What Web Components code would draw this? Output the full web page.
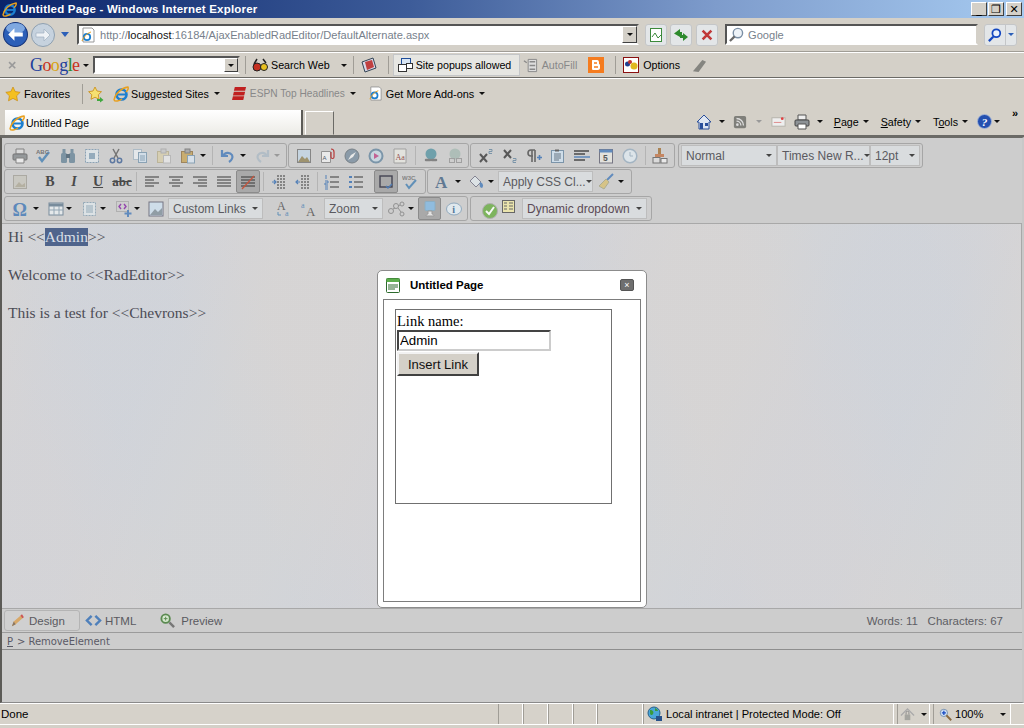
<!DOCTYPE html>
<html>
<head>
<meta charset="utf-8">
<title>Untitled Page</title>
<style>
  html, body { margin: 0; height: 100%; overflow: hidden; background: #d4d0c8; }
  body { font: 11px "Liberation Sans", sans-serif; color: #000; }
</style>
</head>
<body>
<ie-window>
  <ie-titlebar slot="title">Untitled Page - Windows Internet Explorer</ie-titlebar>
  <ie-addressbar slot="address"></ie-addressbar>
  <ie-googlebar slot="google"></ie-googlebar>
  <ie-favbar slot="fav"></ie-favbar>
  <ie-tabbar slot="tabs"></ie-tabbar>
  <rad-editor slot="page"></rad-editor>
  <ie-statusbar slot="status"></ie-statusbar>
</ie-window>

<script>
// every icon used on the page, 16x16 viewBox unless the tag says otherwise
const ICONS = {
  ie: '<circle cx="8.5" cy="8.5" r="5" fill="none" stroke="#1c7fd0" stroke-width="2.6"/><path d="M4 8.5h9" stroke="#1c7fd0" stroke-width="2"/><path d="M1 14C2 8 8 2 15 1c1 2-1 4-2 5M1 14c1 2 5 1 8-1" fill="none" stroke="#e8a020" stroke-width="1.5"/>',
  printer: '<path d="M4 1h8v5H4z" fill="#ddd" stroke="#777"/><rect x="1" y="6" width="14" height="6" rx="1" fill="#8b8f92" stroke="#666"/><path d="M4 10h8v5H4z" fill="#eee" stroke="#777"/>',
  spell: '<path d="M3 9l3 4 7-9" fill="none" stroke="#4f86b5" stroke-width="2.4"/><text x="0" y="6" font-family="Liberation Sans" font-weight="700" font-size="6" fill="#666">ABC</text>',
  binoc: '<rect x="1" y="5" width="6" height="10" rx="1.5" fill="#6f8a9c"/><rect x="9" y="5" width="6" height="10" rx="1.5" fill="#6f8a9c"/><rect x="2.500" y="1" width="3" height="4" fill="#6f8a9c"/><rect x="10.500" y="1" width="3" height="4" fill="#6f8a9c"/><rect x="6" y="6" width="4" height="4" fill="#4f6575"/>',
  selall: '<rect x="1.500" y="1.500" width="13" height="13" fill="#dfe6ea" stroke="#7f9bb0" stroke-dasharray="2 1"/><rect x="5" y="5" width="6" height="6" fill="#8aa6ba"/>',
  cut: '<path d="M5 1l5 9M11 1L6 10" stroke="#666" stroke-width="1.5"/><circle cx="4.500" cy="12.500" r="2.200" fill="none" stroke="#4a6a9a" stroke-width="1.500"/><circle cx="11.500" cy="12.500" r="2.200" fill="none" stroke="#4a6a9a" stroke-width="1.500"/>',
  copy: '<rect x="1.500" y="1.500" width="8" height="10" fill="#e8ecef" stroke="#a8b8c5"/><rect x="6.500" y="4.500" width="8" height="10" fill="#d3e0ec" stroke="#7f9bb0"/><path d="M8 8h5M8 10h5M8 12h5" stroke="#7f9bb0"/>',
  paste: '<rect x="1.500" y="3.500" width="11" height="11" fill="#d8cfae" stroke="#b8b090"/><rect x="5" y="1" width="5" height="4" fill="#c8c8c8" stroke="#aaa"/><rect x="7.500" y="7.500" width="7" height="7.500" fill="#e6e6e6" stroke="#b5b5b5"/>',
  paste2: '<rect x="1.500" y="3.500" width="11" height="11" fill="#c9a860" stroke="#96794a"/><rect x="5" y="1" width="5" height="4" fill="#a5a5a5" stroke="#777"/><rect x="7.500" y="7.500" width="7" height="7.500" fill="#d9e4ee" stroke="#7f9bb0"/>',
  undo: '<path d="M2 2v6h6M3 8c2-4 7-4 9-1 1 2 0 5-3 7" fill="none" stroke="#4f80bb" stroke-width="2.200"/>',
  redo: '<path d="M14 2v6H8M13 8C11 4 6 4 4 7c-1 2 0 5 3 7" fill="none" stroke="#aebbc5" stroke-width="2.200"/>',
  image: '<rect x="1.500" y="1.500" width="13" height="13" fill="#c4d6e4" stroke="#7a7a7a"/><path d="M2 14l4-6 3 3 2-2 3 5z" fill="#96895f"/>',
  docclip: '<path d="M1.500 3.500h9v11h-9z" fill="#eee" stroke="#888"/><path d="M11 1c2 0 3 1 3 3v5c0 2-3 2-3 0V4" fill="none" stroke="#b32020" stroke-width="1.200"/><text x="2.500" y="12" font-family="Liberation Sans" font-size="6" fill="#345">A</text>',
  compass: '<circle cx="8" cy="8" r="7" fill="#7f92a2" stroke="#6a747c"/><path d="M4 12l3-5 5-3-3 5z" fill="#eee"/>',
  media: '<circle cx="8" cy="8" r="6.500" fill="#c8d8e2" stroke="#6d8ca3" stroke-width="2"/><path d="M6 5l5 3-5 3z" fill="#c0508a"/>',
  aa: '<path d="M2 1h12v14H2z" fill="#e6e6e0" stroke="#999"/><text x="3.500" y="12" font-family="Liberation Serif" font-size="8" fill="#8a3a3a">Aa</text>',
  link: '<circle cx="8" cy="6" r="5.500" fill="#5f98a6"/><path d="M3 12h4M9 12h4" stroke="#777" stroke-width="2.500" stroke-linecap="round"/>',
  unlink: '<circle cx="8" cy="6" r="5.500" fill="#a9bcb5"/><rect x="2.500" y="10.500" width="5" height="4" fill="none" stroke="#999"/><rect x="9.500" y="10.500" width="5" height="4" fill="none" stroke="#999"/>',
  sup: '<path d="M2 6l7 8M9 6l-7 8" stroke="#444" stroke-width="2"/><path d="M11 1.500h3v2h-3v2h3" fill="none" stroke="#6d8ca3"/>',
  sub: '<path d="M2 2l7 8M9 2l-7 8" stroke="#444" stroke-width="2"/><path d="M11 10.500h3v2h-3v2h3" fill="none" stroke="#6d8ca3"/>',
  para: '<path d="M9 2v12M6 2v12M9 2H5a3 3 0 000 6h2" fill="none" stroke="#555" stroke-width="1.600"/><path d="M11 9.500h5M13.500 7v5" stroke="#3f74b5" stroke-width="1.600"/>',
  note: '<rect x="1.500" y="2.500" width="12" height="12" fill="#cfe0ee" stroke="#6d8ba3"/><path d="M4 6h7M4 8h7M4 10h7M4 12h5" stroke="#567"/><path d="M5 2.500h4" stroke="#555" stroke-width="2"/>',
  lines: '<path d="M0 3h15M0 6h11M0 12h11" stroke="#333" stroke-width="1.400"/><path d="M0 9h16" stroke="#3f74b5" stroke-width="1.400"/>',
  cal: '<rect x="1.500" y="1.500" width="13" height="13.500" fill="#e6e6e0" stroke="#667"/><rect x="1.500" y="1.500" width="13" height="3" fill="#4f80bb"/><text x="5" y="13" font-family="Liberation Sans" font-size="8.500" font-weight="700" fill="#444">5</text>',
  clock: '<circle cx="8" cy="8" r="6.800" fill="#dfe8ee" stroke="#9cb0c0" stroke-width="1.500"/><path d="M8 4v4h3" fill="none" stroke="#9cb0c0"/>',
  brush: '<rect x="6" y="0" width="3" height="6" fill="#a5763f"/><rect x="3" y="6" width="9" height="3" fill="#c47a50"/><rect x="1" y="9.500" width="7" height="5.500" fill="#ddd" stroke="#666"/><rect x="9" y="10.500" width="6" height="4.500" fill="#eee" stroke="#666"/>',
  ghost: '<rect x="1.500" y="1.500" width="13" height="13" fill="#c9c7bf" stroke="#a5a39b"/><path d="M3 13l4-5 3 3 3-2v4z" fill="#b0ab9a"/>',
  left: '<path d="M1 3h14M1 6h9M1 9h14M1 12h9" stroke="#222" stroke-width="1.200"/>',
  center: '<path d="M1 3h14M4 6h8M1 9h14M4 12h8" stroke="#222" stroke-width="1.200"/>',
  right: '<path d="M1 3h14M6 6h9M1 9h14M6 12h9" stroke="#222" stroke-width="1.200"/>',
  justify: '<path d="M1 3h14M1 6h14M1 9h14M1 12h14" stroke="#222" stroke-width="1.200"/>',
  nojustify: '<path d="M1 3h14M1 6h14M1 9h14M1 12h14" stroke="#222" stroke-width="1.200"/><path d="M2 15L14 2" stroke="#c8482c" stroke-width="1.300"/>',
  indent: '<path d="M6 2h9M6 5h9M6 8h9M6 11h9M6 14h9" stroke="#222" stroke-dasharray="2 1"/><path d="M1 8h4M3 6l2 2-2 2" fill="none" stroke="#3f74b5" stroke-width="1.200"/>',
  outdent: '<path d="M6 2h9M6 5h9M6 8h9M6 11h9M6 14h9" stroke="#222" stroke-dasharray="2 1"/><path d="M5 8H1M3 6L1 8l2 2" fill="none" stroke="#3f74b5" stroke-width="1.200"/>',
  ol: '<path d="M6 3h9M6 8h9M6 13h9" stroke="#222" stroke-width="1.200"/><path d="M2 1v4M1 7h3v2H1v2h3M1 13h3M1 15h3" fill="none" stroke="#3f74b5"/>',
  ul: '<path d="M6 3h9M6 8h9M6 13h9" stroke="#222" stroke-width="1.200"/><path d="M1 3h3M1 8h3M1 13h3" stroke="#3f74b5" stroke-width="2"/>',
  frame: '<rect x="2" y="2" width="12" height="11" fill="none" stroke="#334" stroke-width="1.400"/><path d="M8 12l2 2 4-4" fill="none" stroke="#3f74b5" stroke-width="1.400"/>',
  w3c: '<text x="0" y="6" font-family="Liberation Sans" font-weight="700" font-size="6" fill="#777">W3C</text><path d="M4 10l3 4 7-8" fill="none" stroke="#4f86b5" stroke-width="2"/>',
  fontcolor: '<text x="1" y="14" font-family="Liberation Serif" font-weight="700" font-size="17" fill="#4d6a88">A</text>',
  bucket: '<path d="M2 7l5-5 6 6-5 5z" fill="#dfe6ea" stroke="#778"/><path d="M12 8c3 1 4 4 2 6-2 0-3-3-2-6z" fill="#4f80bb"/>',
  broom: '<path d="M15 0L8 7" stroke="#4f80bb" stroke-width="2"/><path d="M8 5l3 3-5 7-5-3z" fill="#d8c27a" stroke="#a8a888"/>',
  omega: '<text x="0.500" y="15" font-family="Liberation Serif" font-weight="700" font-size="18" fill="#4a7db8">Ω</text>',
  table: '<rect x="1" y="2" width="14" height="12" fill="#e9edf0" stroke="#6a8194"/><path d="M1 4h14" stroke="#6a8194" stroke-width="3"/><path d="M6 5v9M11 5v9M1 9h14" stroke="#8aa0b0"/>',
  form: '<rect x="1.500" y="1.500" width="12" height="13" fill="#dfe6ea" stroke="#8aa3b4" stroke-dasharray="2 1"/><path d="M4 5h7M4 7h7M4 9h7M4 11h7" stroke="#8aa3b4"/>',
  snippet: '<rect x="0.500" y="0.500" width="12" height="10" fill="none" stroke="#888" stroke-dasharray="1 1"/><path d="M5 3L3 5.500l2 2.500M8 3l2 2.500L8 8" fill="none" stroke="#8b2fa8" stroke-width="1.400"/><path d="M12 9v7M8.500 12.500h7" stroke="#4f80bb" stroke-width="2"/>',
  imgmap: '<rect x="1" y="1" width="14" height="14" fill="#cfe0ee" stroke="#667"/><path d="M2 14l5-6 3 3 4-4v7z" fill="#86959f"/>',
  case1: '<text x="1" y="9" font-family="Liberation Serif" font-size="12" fill="#555">A</text><path d="M2 11v3h3" fill="none" stroke="#4f86b5"/><text x="9" y="15" font-family="Liberation Serif" font-size="8" fill="#4f86b5">a</text>',
  case2: '<text x="6" y="15" font-family="Liberation Serif" font-size="13" fill="#555">A</text><text x="1" y="7" font-family="Liberation Serif" font-size="8" fill="#4f86b5">a</text>',
  nodes: '<circle cx="3" cy="10" r="2.500" fill="none" stroke="#888"/><circle cx="14" cy="3" r="2" fill="none" stroke="#888"/><circle cx="14" cy="13" r="2" fill="none" stroke="#888"/><circle cx="8" cy="5" r="2.500" fill="none" stroke="#888"/><path d="M5 8l2-1M10 5l2-1M10 7l3 4" stroke="#888"/>',
  monitor: '<rect x="3" y="0.500" width="10" height="9" rx="1" fill="#8cc0e8" stroke="#88b0c8"/><path d="M6 10h4v3c1 0 2 1 2 2H4c0-1 1-2 2-2z" fill="#eee" stroke="#999"/>',
  info: '<ellipse cx="8" cy="8" rx="7.500" ry="6" fill="#e4edf3" stroke="#86a4bc"/><text x="6.300" y="12" font-family="Liberation Serif" font-weight="700" font-size="10" fill="#3f6a94">i</text>',
  okgreen: '<circle cx="8" cy="8" r="7.500" fill="#6fb04a" stroke="#aaa"/><path d="M4 8l3 3 5-7" fill="none" stroke="#fff" stroke-width="2"/>',
  listy: '<rect x="1.500" y="1.500" width="12" height="12" fill="#f0e8a8" stroke="#555"/><path d="M3 4h3M8 4h4M3 7h3M8 7h4M3 10h3M8 10h4" stroke="#555"/>',
  pencil: '<path d="M2 14l2-5 8-7 2 3-8 7z" fill="#d8a868"/><path d="M2 14l2-5 2 3z" fill="#887766"/><path d="M12 2l2 3" stroke="#c55" stroke-width="2"/>',
  code: '<path d="M6 3L1 8l5 5M10 3l5 5-5 5" fill="none" stroke="#4f80bb" stroke-width="2.600"/>',
  zoomg: '<circle cx="6" cy="6" r="4.500" fill="#d6e8cf" stroke="#5a8a50" stroke-width="2"/><path d="M6 4v4M4 6h4" stroke="#5a8a50"/><path d="M10 10l5 5" stroke="#777" stroke-width="2.600"/>',
  back: '<circle cx="12" cy="12" r="11.500" fill="#2c5fb8" stroke="#17357a"/><ellipse cx="12" cy="6" rx="9" ry="5" fill="#7fa8e0"/><path d="M5 12l6-6v4h8v4h-8v4z" fill="#fff"/>',
  forward: '<circle cx="12" cy="12" r="11.500" fill="#c6d2de" stroke="#8fa0b0"/><path d="M19 12l-6-6v4H5v4h8v4z" fill="#eef2f6" stroke="#9fb0c0" stroke-width=".7"/>',
  compat: '<rect x="2.500" y="1.500" width="11" height="13" fill="#fff" stroke="#3c8a3c"/><path d="M4 10l3-4 3 5 3-3" fill="none" stroke="#3c8a3c"/>',
  refresh: '<path d="M7 2L1 6.500 7 10V8h2V5H7zM10 14l5-4-5-4v2H7v3h3z" fill="#2d8a2d"/>',
  stop: '<path d="M3 3l10 10M13 3L3 13" stroke="#c03838" stroke-width="3"/>',
  mag: '<circle cx="9.500" cy="6.500" r="5" fill="#eef3f8" stroke="#7b8fa5" stroke-width="1.500"/><path d="M6 10l-5 5" stroke="#6a6a6a" stroke-width="2.400"/>',
  magblue: '<circle cx="9.500" cy="6" r="4.500" fill="#eaf2fb" stroke="#1447c0" stroke-width="2"/><path d="M6 10l-5 5" stroke="#1447c0" stroke-width="2.600"/>',
  x: '<path d="M3 3l9 9M12 3l-9 9" stroke="#9a9a9a" stroke-width="2.400"/>',
  glasses: '<circle cx="5" cy="10" r="4" fill="#c43020" stroke="#222"/><circle cx="12" cy="10" r="3.500" fill="#e8c020" stroke="#222"/><path d="M2 7l3-5M14 6l-3-4" stroke="#222" stroke-width="1.500"/>',
  stamp: '<path d="M1 5l11-4 3 10-11 4z" fill="#d8d8e8" stroke="#345"/><path d="M4 5l7-2 2 7-7 3z" fill="#c04040"/>',
  popups: '<rect x="4.500" y="1.500" width="9" height="6" fill="#d9e6f4" stroke="#1f4e9a"/><rect x="1.500" y="7.500" width="8" height="7" fill="#fff" stroke="#333"/><rect x="9.500" y="6.500" width="6" height="5" fill="#fff" stroke="#333"/>',
  autofill: '<path d="M5.500 1.500h9v13h-9z" fill="#ddd" stroke="#888"/><path d="M7 4h6M7 8h6M7 12h6M1 3l3 2" stroke="#888" stroke-width="1.400"/>',
  blogger: '<rect x="0" y="0" width="16" height="16" fill="#f57c1f"/><path d="M5 3h4c2 0 2 2 2 3v1c1 0 1 1 1 2v2c0 1-1 2-2 2H5c-1 0-1-1-1-1V4c0-1 0-1 1-1z" fill="#fff"/><path d="M6 6h3M6 10h4" stroke="#f57c1f" stroke-width="1.400"/>',
  options: '<rect x="0.500" y="0.500" width="15" height="15" fill="#fff" stroke="#8a1010"/><circle cx="4.500" cy="7" r="2.500" fill="#1f3f90"/><circle cx="7" cy="5" r="2" fill="#c03030"/><circle cx="11" cy="9" r="3.500" fill="#e0b820"/>',
  pen: '<path d="M1 14L11 2l4 2-8 11z" fill="#858580"/>',
  star: '<path d="M8 1l2.200 4.600 5 .7-3.600 3.500.9 5L8 12.400l-4.500 2.400.9-5L.8 6.300l5-.7z" fill="#f4c020" stroke="#c98a10" stroke-width=".7"/>',
  staradd: '<path d="M7 1l2 4 4.500 .7-3.200 3.100.8 4.500L7 11.200l-4 2.100.8-4.500L.6 5.700 5 5z" fill="#f6e070" stroke="#c98a10" stroke-width=".8"/><path d="M9 13h3v-2l3.500 3-3.500 2.500V15H9z" fill="#3fa83f"/>',
  espn: '<path d="M3 1h12l-1 4H2zM2 6h12l-1 4H1zM1 11h12l-1 4H0z" fill="#c02020"/>',
  pageie: '<path d="M3 1h9l2 2v12H3z" fill="#fff" stroke="#999"/><circle cx="7" cy="10" r="3.200" fill="none" stroke="#1c7fd0" stroke-width="1.800"/><path d="M2 14c1-3 5-8 9-9" fill="none" stroke="#e8a020"/>',
  home: '<path d="M8 1L1 8h2v7h10V8h2z" fill="#dfe6f2" stroke="#2a4f9a"/><rect x="4" y="9" width="3" height="6" fill="#2a4f9a"/><rect x="9" y="9" width="3" height="3" fill="#2a4f9a"/>',
  rss: '<rect x="1" y="1" width="14" height="14" rx="2" fill="#7f7f7a"/><circle cx="5" cy="11" r="1.500" fill="#ddd"/><path d="M4 7a5 5 0 015 5M4 4a8 8 0 018 8" fill="none" stroke="#ddd" stroke-width="1.500"/>',
  mail: '<rect x="1" y="4" width="14" height="9" fill="#eee" stroke="#b5b2aa"/><path d="M3 9h8" stroke="#d88"/><circle cx="12" cy="5" r="1.500" fill="#e04040"/>',
  print2: '<path d="M4 1h8v5H4z" fill="#eee" stroke="#555"/><rect x="1" y="6" width="14" height="6" rx="1" fill="#8d9296" stroke="#444"/><path d="M4 10h8v5H4z" fill="#fff" stroke="#555"/>',
  help: '<circle cx="8" cy="8" r="7.500" fill="#2450b0" stroke="#a8b8d8"/><text x="5" y="13" font-family="Liberation Serif" font-weight="700" font-style="italic" font-size="12" fill="#fff">?</text>',
  dlg: '<rect x="1.500" y="1.500" width="13" height="14" rx="1" fill="#fff" stroke="#2c6a2c"/><rect x="1.500" y="1.500" width="13" height="3.500" fill="#5cae4c"/><path d="M3 8h10M3 10h10M3 12h7" stroke="#2c6a2c"/>',
  zone: '<circle cx="7" cy="7" r="6" fill="#4aa6d8" stroke="#26608a"/><path d="M3 4c3 0 4 2 3 4S3 9 3 7zM8 2c2 1 3 2 3 3H8z" fill="#3a9a3a"/><rect x="9" y="10" width="6" height="5" fill="#26508a"/>',
  shield: '<path d="M1 9l7-7 7 7" fill="none" stroke="#aaa" stroke-width="1.500"/><rect x="5" y="8" width="6" height="6" fill="#a5a5a0"/><path d="M6.500 8V6a1.500 1.500 0 013 0v2" fill="none" stroke="#888"/>',
  zoom: '<circle cx="6" cy="6" r="4.500" fill="#cfe0f5" stroke="#6a86a8"/><path d="M6 3.500v5M3.500 6h5" stroke="#1447c0" stroke-width="1.500"/><path d="M9 9l6 6" stroke="#8a6a40" stroke-width="2.400"/>'
};

function define(tag, css, html) {
  customElements.define(tag, class extends HTMLElement {
    connectedCallback() {
      if (this.shadowRoot) return;
      this.attachShadow({ mode: 'open' });
      this.shadowRoot.innerHTML = `<style>${css}</style>${typeof html === 'function' ? html(this) : html}`;
    }
  });
}

// <x-icon name="cut" size="16">
define('x-icon', ':host{display:inline-flex;flex:none}svg{display:block;overflow:visible}', (el) => {
  const s = el.getAttribute('size') || 16;
  const n = el.getAttribute('name');
  const vb = (n === 'back' || n === 'forward') ? 24 : 16;
  return `<svg width="${s}" height="${s}" viewBox="0 0 ${vb} ${vb}">${ICONS[n] || ''}</svg>`;
});

// small black dropdown arrow
define('x-caret', `:host{display:inline-block;flex:none;width:0;height:0;border:3px solid transparent;border-top:3px solid var(--caret,#111);border-bottom:0}`, '');

define('ie-window', `
  :host{display:flex;flex-direction:column;width:1024px;height:728px;background:#d4d0c8;overflow:hidden}
`, `<slot name="title"></slot><slot name="address"></slot><slot name="google"></slot><slot name="fav"></slot><slot name="tabs"></slot><slot name="page"></slot><slot name="status"></slot>`);

define('ie-titlebar', `
  :host{display:flex;align-items:center;height:18px;flex:none;background:linear-gradient(90deg,#0a246a 0%,#3d5c99 40%,#7e9ccc 70%,#a6caf0 100%);color:#fff;font:700 11.500px "Liberation Sans",sans-serif;padding-left:2px;gap:3px}
  .txt{flex:1;white-space:nowrap;letter-spacing:.2px}
  .btns{display:flex;margin-right:2px}
  .b{width:16px;height:14px;background:#d4d0c8;border:1px solid;border-color:#fff #404040 #404040 #fff;box-sizing:border-box;color:#000;display:flex;align-items:center;justify-content:center;font:700 11px "DejaVu Sans",sans-serif;line-height:1}
`, `<x-icon name="ie" size="15"></x-icon><div class="txt"><slot></slot></div>
  <div class="btns"><div class="b">_</div><div class="b" style="margin-left:1px">❐</div><div class="b" style="margin-left:2px">✕</div></div>`);

define('ie-addressbar', `
  :host{display:flex;align-items:center;flex:none;height:34px;box-sizing:border-box;padding:0 6px 0 3px;border-bottom:1px solid #a09d96;font:11.100px "Liberation Sans",sans-serif}
  .nav{display:flex;align-items:center;width:74px;flex:none}
  .nav x-icon+x-icon{margin-left:3px}
  .drop{width:0;height:0;border:4px solid transparent;border-top:5px solid #2c5fb8;border-bottom:0;margin-left:6px}
  .addr{width:562px;height:21px;flex:none;box-sizing:border-box;display:flex;align-items:center;background:#fff;border:2px solid;border-color:#555 #d4d0c8 #fff #555;padding-left:1px;color:#777f8c;white-space:nowrap;overflow:hidden}
  .addr b{font-weight:400;color:#111}
  .addr span{margin-left:4px;flex:1}
  .cb{width:15px;height:17px;background:#d4d0c8;border:1px solid;border-color:#fff #404040 #404040 #fff;box-sizing:border-box;display:flex;align-items:center;justify-content:center;flex:none}
  .sq{width:22px;height:22px;box-sizing:border-box;background:#e3e6e8;border:1px solid #c4c6c8;border-radius:3px;display:flex;align-items:center;justify-content:center;flex:none}
  .search{width:253px;height:21px;flex:none;box-sizing:border-box;margin-left:7px;background:#fff;border:2px solid;border-color:#555 #d4d0c8 #fff #555;display:flex;align-items:center;gap:4px;color:#777f8c;padding-left:2px}
  .go{display:flex;margin-left:6px;height:22px;width:33px;border:1px solid #c4c6c8;border-radius:3px;background:#e3e6e8;box-sizing:border-box;align-items:center}
  .go .m{width:20px;display:flex;justify-content:center}
  .go .d{flex:1;display:flex;justify-content:center;border-left:1px solid #c4c6c8;height:100%;align-items:center;--caret:#2c5fb8}
`, `
  <div class="nav"><x-icon name="back" size="25"></x-icon><x-icon name="forward" size="24"></x-icon><span class="drop"></span></div>
  <div class="addr"><x-icon name="pageie" size="16"></x-icon><span>http://<b>localhost</b>:16184/AjaxEnabledRadEditor/DefaultAlternate.aspx</span><div class="cb"><x-caret></x-caret></div></div>
  <div class="sq" style="margin-left:6px"><x-icon name="compat" size="16"></x-icon></div>
  <div class="sq" style="margin-left:3px"><x-icon name="refresh" size="16"></x-icon></div>
  <div class="sq" style="margin-left:4px"><x-icon name="stop" size="14"></x-icon></div>
  <div class="search"><x-icon name="mag" size="15"></x-icon>Google</div>
  <div class="go"><div class="m"><x-icon name="magblue" size="14"></x-icon></div><div class="d"><x-caret></x-caret></div></div>
`);

define('ie-googlebar', `
  :host{display:flex;align-items:center;flex:none;height:26px;box-sizing:border-box;border-top:1px solid #fff;border-bottom:1px solid #6b6a66;font:10.700px "Liberation Sans",sans-serif;padding-left:7px;white-space:nowrap}
  .logo{font:18px "Liberation Serif",serif;margin-left:12px;letter-spacing:-.6px;line-height:1;width:50px;flex:none}
  .sbox{width:147px;height:18px;margin-left:4px;box-sizing:border-box;background:#fff;border:2px solid;border-color:#555 #d4d0c8 #fff #555;display:flex;justify-content:flex-end;align-items:center}
  .cb{width:14px;height:14px;background:#d4d0c8;border:1px solid;border-color:#fff #404040 #404040 #fff;box-sizing:border-box;display:flex;align-items:center;justify-content:center}
  .sep{width:1px;height:18px;background:#a09d96;flex:none}
  .pop{display:flex;align-items:center;gap:3px;height:22px;background:#e6e6e2;border:1px solid #c4c6c8;box-sizing:border-box;padding:0 0 0 3px;width:127px}
  .gray{color:#888}
`, `
  <x-icon name="x" size="11"></x-icon>
  <span class="logo"><span style="color:#1f3f9c">G</span><span style="color:#c83020">o</span><span style="color:#d8a010">o</span><span style="color:#1f3f9c">g</span><span style="color:#2a8a30">l</span><span style="color:#c83020">e</span></span>
  <x-caret style="margin-left:3px"></x-caret>
  <div class="sbox"><div class="cb"><x-caret></x-caret></div></div>
  <span class="sep" style="margin-left:5px"></span>
  <x-icon name="glasses" size="16" style="margin-left:6px"></x-icon><span style="margin-left:3px">Search Web</span>
  <x-caret style="margin-left:11px"></x-caret>
  <span class="sep" style="margin-left:6px"></span>
  <x-icon name="stamp" size="16" style="margin-left:7px"></x-icon>
  <span class="sep" style="margin-left:11px"></span>
  <div class="pop" style="margin-left:4px"><x-icon name="popups" size="16"></x-icon>Site popups allowed</div>
  <x-icon name="autofill" size="15" style="margin-left:3px"></x-icon><span class="gray" style="margin-left:4px">AutoFill</span>
  <x-icon name="blogger" size="16" style="margin-left:11px"></x-icon>
  <span class="sep" style="margin-left:11px"></span>
  <x-icon name="options" size="16" style="margin-left:7px"></x-icon><span style="margin-left:4px">Options</span>
  <x-icon name="pen" size="15" style="margin-left:12px"></x-icon>
`);

define('ie-favbar', `
  :host{display:flex;align-items:center;flex:none;height:32px;box-sizing:border-box;border-top:1px solid #fff;padding:0 0 2px 5px;font:10.700px "Liberation Sans",sans-serif;white-space:nowrap}
  .sep{width:1px;height:20px;background:#a09d96;margin:0 5px 0 12px}
  .item{display:flex;align-items:center;flex:none}
`, `
  <x-icon name="star" size="16"></x-icon><span style="margin-left:3px;font-size:11.200px">Favorites</span><span class="sep"></span>
  <div class="item"><x-icon name="staradd" size="16"></x-icon></div>
  <div class="item" style="margin-left:9px"><x-icon name="ie" size="16"></x-icon><span style="margin-left:2px">Suggested Sites</span><x-caret style="margin-left:5px"></x-caret></div>
  <div class="item" style="color:#888;margin-left:12px"><x-icon name="espn" size="15"></x-icon><span style="margin-left:3px;font-size:10.200px">ESPN Top Headlines</span><x-caret style="margin-left:5px"></x-caret></div>
  <div class="item" style="margin-left:12px"><x-icon name="pageie" size="15"></x-icon><span style="margin-left:3px;font-size:10.900px">Get More Add-ons</span><x-caret style="margin-left:5px"></x-caret></div>
`);

define('ie-tabbar', `
  :host{display:flex;align-items:flex-end;flex:none;height:27px;box-sizing:border-box;border-bottom:2px solid #6b6a66;padding-left:5px;font:10.700px "Liberation Sans",sans-serif;white-space:nowrap}
  .tab{width:298px;height:25px;box-sizing:border-box;display:flex;align-items:center;background:linear-gradient(#fff,#ecebe6);border-right:2px solid #5c5b57;padding-left:4px;font-size:10.500px}
  .new{width:29px;height:24px;box-sizing:border-box;margin-left:2px;border:1px solid;border-color:#fff #6b6a66 transparent #fff}
  .cmds{margin-left:auto;display:flex;align-items:center;height:25px;padding-bottom:2px;box-sizing:border-box;padding-right:4px}
  u{text-decoration:underline;text-underline-offset:1px}
`, `
  <div class="tab"><x-icon name="ie" size="16"></x-icon><span style="margin-left:1px">Untitled Page</span></div><div class="new"></div>
  <div class="cmds">
    <x-icon name="home" size="16"></x-icon><x-caret style="margin:0 8px 0 7px"></x-caret>
    <x-icon name="rss" size="14"></x-icon><x-caret style="margin:0 9px 0 9px;--caret:#999"></x-caret>
    <x-icon name="mail" size="15"></x-icon>
    <x-icon name="print2" size="16" style="margin-left:8px"></x-icon><x-caret style="margin:0 11px 0 7px"></x-caret>
    <span><u>P</u>age</span><x-caret style="margin:0 12px 0 4px"></x-caret>
    <span><u>S</u>afety</span><x-caret style="margin:0 12px 0 4px"></x-caret>
    <span>T<u>o</u>ols</span><x-caret style="margin:0 9px 0 4px"></x-caret>
    <x-icon name="help" size="15"></x-icon><x-caret style="margin:0 12px 0 2px"></x-caret>
    <span style="font-size:11px;font-weight:700;align-self:flex-start;margin-top:-3px;width:8px">»</span>
  </div>
`);

// one rounded toolbar group
define('tool-group', `
  :host{display:flex;align-items:center;height:25px;box-sizing:border-box;border:1px solid #a6a6a6;border-radius:3px;padding:0 0 0 3px;background:#cecece;flex:none}
`, `<slot></slot>`);

// thin divider inside a group
define('tool-sep', `:host{display:block;flex:none;width:1px;height:19px;margin-left:3px;background:#b4b4b4}`, '');

// icon button; "active" draws it pressed
define('tool-btn', `
  :host{display:flex;align-items:center;justify-content:center;height:23px;flex:none;width:var(--w,24px);gap:var(--g,2px);box-sizing:border-box;border-radius:2px}
  :host([active]){background:#a9a9a9;border:1px solid #8b8b8b}
  :host([letter]){font:700 14px "Liberation Serif",serif;color:#4a4a4a}
  x-icon{opacity:.85}
`, (el) => el.hasAttribute('letter') ? '<slot></slot>' : `<x-icon name="${el.getAttribute('icon') || ''}" size="${el.getAttribute('size') || 16}"></x-icon><slot></slot>`);

// dropdown in a toolbar group
define('tool-select', `
  :host{display:flex;align-items:center;justify-content:space-between;height:21px;box-sizing:border-box;background:#d9dcde;border:1px solid #bdbdbd;padding:0 4px 0 4px;font:12px "Liberation Sans",sans-serif;color:#5a5a60;white-space:nowrap;flex:none;--caret:#444}
`, `<slot></slot><x-caret></x-caret>`);

define('rad-editor', `
  :host{display:block;flex:none;position:relative;height:566px;box-sizing:border-box;background:#cdcdcd;border-left:2px solid #5c5b57;border-right:2px solid #c8c8c8;border-top:1px solid #6b6a66;border-bottom:1px solid #8a8a8a;overflow:hidden;font:12px "Liberation Sans",sans-serif;color:#555}
  .bars{height:85px;box-sizing:border-box;padding:5px 0 0 2px;display:flex;flex-direction:column}
  .row{display:flex;gap:1px;height:25px;align-items:center;flex:none}
  .content{height:386px;box-sizing:border-box;border:1px solid #a8a8a8;border-left:0;padding:3px 6px;font:15.500px/19px "Liberation Serif",serif;color:#4c4c55;
    background:
      repeating-linear-gradient(68deg,rgba(235,215,205,.09) 0 90px,rgba(200,215,235,.09) 180px 270px,rgba(235,215,205,.09) 360px),
      repeating-linear-gradient(-68deg,rgba(235,225,205,.09) 0 90px,rgba(205,215,235,.09) 180px 270px,rgba(235,225,205,.09) 360px),
      #d2d3d6}
  .content p{margin:0 0 19px}
  .sel{background:#4f648c;color:#d8dfe6;display:inline-block;line-height:18px}
  .modes{height:24px;box-sizing:border-box;display:flex;align-items:center;padding-left:2px;border-bottom:1px solid #9b9b9b;background:#cdcdcd}
  .mode{display:flex;align-items:center;gap:4px;height:21px;box-sizing:border-box;color:#5a5a60;font-size:11.500px;flex:none}
  .mode.on{border:1px solid #b4b4b4;border-radius:3px;background:#d0d0d0;width:76px;padding-left:5px}
  .stats{margin-left:auto;margin-right:19px;color:#5e5e64;white-space:pre;font-size:11.500px}
  .path{height:17px;box-sizing:border-box;display:flex;align-items:center;border-bottom:1px solid #8e8e8e;padding-left:5px;font:10px "DejaVu Sans",sans-serif;color:#5a5a66;gap:4px;letter-spacing:-.05px}
  .path u{text-decoration:underline}
`, `
  <div class="bars">
    <div class="row">
      <tool-group style="width:283px">
        <tool-btn icon="printer"></tool-btn><tool-btn icon="spell"></tool-btn><tool-btn icon="binoc"></tool-btn><tool-btn icon="selall"></tool-btn><tool-btn icon="cut"></tool-btn><tool-btn icon="copy"></tool-btn><tool-btn icon="paste"></tool-btn>
        <tool-btn icon="paste2" style="--w:34px;--g:4px"><x-caret></x-caret></tool-btn>
        <tool-sep style="margin-left:2px"></tool-sep>
        <tool-btn icon="undo" style="--w:34px;--g:4px;margin-left:3px"><x-caret></x-caret></tool-btn><tool-btn icon="redo" style="--w:34px;--g:4px"><x-caret style="--caret:#999"></x-caret></tool-btn>
      </tool-group>
      <tool-group style="width:181px">
        <tool-btn icon="image"></tool-btn><tool-btn icon="docclip"></tool-btn><tool-btn icon="compass"></tool-btn><tool-btn icon="media"></tool-btn><tool-btn icon="aa"></tool-btn>
        <tool-sep></tool-sep>
        <tool-btn icon="link" style="margin-left:3px"></tool-btn><tool-btn icon="unlink"></tool-btn>
      </tool-group>
      <tool-group style="width:205px">
        <tool-btn icon="sup"></tool-btn><tool-btn icon="sub"></tool-btn><tool-btn icon="para"></tool-btn><tool-btn icon="note"></tool-btn><tool-btn icon="lines"></tool-btn><tool-btn icon="cal"></tool-btn><tool-btn icon="clock"></tool-btn>
        <tool-sep></tool-sep>
        <tool-btn icon="brush" style="margin-left:2px"></tool-btn>
      </tool-group>
      <tool-group style="width:245px;margin-left:2px;padding-left:2px">
        <tool-select style="width:96px">Normal</tool-select><tool-select style="width:93px">Times New R...</tool-select><tool-select style="width:50px">12pt</tool-select>
      </tool-group>
    </div>
    <div class="row" style="margin-top:1px">
      <tool-group style="width:422px">
        <tool-btn icon="ghost" style="--w:24px"></tool-btn>
        <tool-btn letter style="margin-left:6px">B</tool-btn><tool-btn letter style="font-style:italic">I</tool-btn><tool-btn letter style="text-decoration:underline">U</tool-btn><tool-btn letter style="text-decoration:line-through;font-size:13px">abc</tool-btn>
        <tool-sep style="margin-left:2px"></tool-sep>
        <tool-btn icon="left" style="margin-left:3px"></tool-btn><tool-btn icon="center"></tool-btn><tool-btn icon="right"></tool-btn><tool-btn icon="justify"></tool-btn><tool-btn icon="nojustify" active></tool-btn>
        <tool-sep></tool-sep>
        <tool-btn icon="indent" style="margin-left:3px"></tool-btn><tool-btn icon="outdent"></tool-btn>
        <tool-sep style="margin-left:2px"></tool-sep>
        <tool-btn icon="ol" style="margin-left:2px"></tool-btn><tool-btn icon="ul"></tool-btn>
        <tool-btn icon="frame" active style="margin-left:6px"></tool-btn><tool-btn icon="w3c"></tool-btn>
      </tool-group>
      <tool-group style="width:205px;padding-left:4px">
        <tool-btn icon="fontcolor" style="--w:30px;--g:5px"><x-caret></x-caret></tool-btn><tool-btn icon="bucket" style="--w:30px;--g:4px;margin-left:4px"><x-caret></x-caret></tool-btn>
        <tool-select style="width:95px;margin-left:2px">Apply CSS Cl...</tool-select>
        <tool-btn icon="broom" style="--w:30px;--g:4px;margin-left:3px"><x-caret></x-caret></tool-btn>
      </tool-group>
    </div>
    <div class="row" style="margin-top:2px">
      <tool-group style="width:464px">
        <tool-btn icon="omega" style="--w:34px;--g:5px"><x-caret></x-caret></tool-btn>
        <tool-btn icon="table" style="--w:28px;margin-left:4px"><x-caret></x-caret></tool-btn>
        <tool-btn icon="form" style="--w:28px;margin-left:6px"><x-caret></x-caret></tool-btn>
        <tool-btn icon="snippet" style="--w:28px;margin-left:6px"><x-caret></x-caret></tool-btn>
        <tool-btn icon="imgmap" style="--w:16px;margin-left:6px"></tool-btn>
        <tool-select style="width:95px;margin-left:4px">Custom Links</tool-select>
        <tool-btn icon="case1" style="--w:16px;margin-left:13px"></tool-btn><tool-btn icon="case2" style="--w:16px;margin-left:8px"></tool-btn>
        <tool-select style="width:59px;margin-left:8px">Zoom</tool-select>
        <tool-btn icon="nodes" style="--w:26px;--g:4px;margin-left:5px"><x-caret></x-caret></tool-btn>
        <tool-btn icon="monitor" active style="--w:23px;margin-left:4px"></tool-btn>
        <tool-btn icon="info" style="--w:16px;margin-left:5px"></tool-btn>
      </tool-group>
      <tool-group style="width:182px;margin-left:1px">
        <tool-btn icon="okgreen" style="--w:16px;margin-left:8px;margin-top:4px"></tool-btn><tool-btn icon="listy" style="--w:16px;margin-left:3px;margin-bottom:4px"></tool-btn>
        <tool-select style="width:125px;margin-left:5px;color:#5b4a55">Dynamic dropdown</tool-select>
      </tool-group>
    </div>
  </div>
  <div class="content">
    <p>Hi &lt;&lt;<span class="sel">Admin</span>&gt;&gt;</p>
    <p>Welcome to &lt;&lt;RadEditor&gt;&gt;</p>
    <p>This is a test for &lt;&lt;Chevrons&gt;&gt;</p>
  </div>
  <div class="modes">
    <div class="mode on"><x-icon name="pencil" size="15"></x-icon>Design</div>
    <div class="mode" style="margin-left:6px"><x-icon name="code" size="15"></x-icon>HTML</div>
    <div class="mode" style="margin-left:24px;gap:6px"><x-icon name="zoomg" size="15"></x-icon>Preview</div>
    <div class="stats">Words: 11   Characters: 67</div>
  </div>
  <div class="path"><u>P</u> &gt; RemoveElement</div>
  <link-dialog></link-dialog>
`);

// floating dialog on top of the editor
define('link-dialog', `
  :host{position:absolute;left:375px;top:132px;width:270px;height:338px;box-sizing:border-box;background:#fff;border:1px solid #8c8c8c;border-radius:5px;padding:0 5px 5px 5px;display:flex;flex-direction:column;color:#000}
  .head{height:28px;flex:none;display:flex;align-items:center;padding:0 7px 0 2px;font:700 11.500px "Liberation Sans",sans-serif;gap:9px}
  .head span{flex:1}
  .close{width:12px;height:10px;background:#6f6f6f;border:1px solid #555;border-radius:2px;color:#fff;font:9px/10px "Liberation Sans",sans-serif;text-align:center}
  .body{flex:1;border:1px solid #7d7d7d;padding:9px 0 0 11px}
  .frame{width:217px;height:195px;box-sizing:border-box;border:1px solid #707070;padding:3px 1px 0;font:14.500px/17px "Liberation Serif",serif}
  input{display:block;width:154px;height:21px;box-sizing:border-box;margin:0;border:2px solid;border-color:#444 #ccc #ccc #444;padding:1px 1px;font:13.300px "Liberation Sans",sans-serif;background:#fff;color:#000;outline:0}
  button{display:block;width:82px;height:24px;margin:1px 0 0 0;box-sizing:border-box;padding:0;background:#d4d0c8;border:2px solid;border-color:#f2f2f2 #404040 #404040 #f2f2f2;font:13px "Liberation Sans",sans-serif;color:#111}
`, `
  <div class="head"><x-icon name="dlg" size="16"></x-icon><span>Untitled Page</span><div class="close">×</div></div>
  <div class="body"><div class="frame">Link name:<input value="Admin"><button>Insert Link</button></div></div>
`);

define('ie-statusbar', `
  :host{display:flex;align-items:stretch;flex:none;height:22px;box-sizing:border-box;margin-top:0;border-top:1px solid #fff;border-bottom:1px solid #fff;font:11.100px "Liberation Sans",sans-serif;white-space:nowrap;background:#d6d2ca}
  .cell{border-right:1px solid #fff;border-left:1px solid #a09d96;display:flex;align-items:center;box-sizing:border-box;flex:none}
  .done{width:497px;padding-left:1px;flex:none;display:flex;align-items:center;font-size:11.500px}
`, `
  <div class="done">Done</div>
  <div class="cell" style="width:25px"></div><div class="cell" style="width:25px"></div><div class="cell" style="width:25px"></div><div class="cell" style="width:24px"></div><div class="cell" style="width:46px"></div>
  <div class="cell" style="width:251px;gap:3px;padding-left:3px"><x-icon name="zone" size="16"></x-icon>Local intranet | Protected Mode: Off</div>
  <div class="cell" style="width:33px;margin-left:3px;gap:6px;padding-left:2px"><x-icon name="shield" size="15"></x-icon><x-caret></x-caret></div>
  <div class="cell" style="width:78px;margin-left:3px;gap:3px;padding-left:5px"><x-icon name="zoom" size="13"></x-icon>100%<x-caret style="margin-left:14px"></x-caret></div>
`);
</script>
</body>
</html>
